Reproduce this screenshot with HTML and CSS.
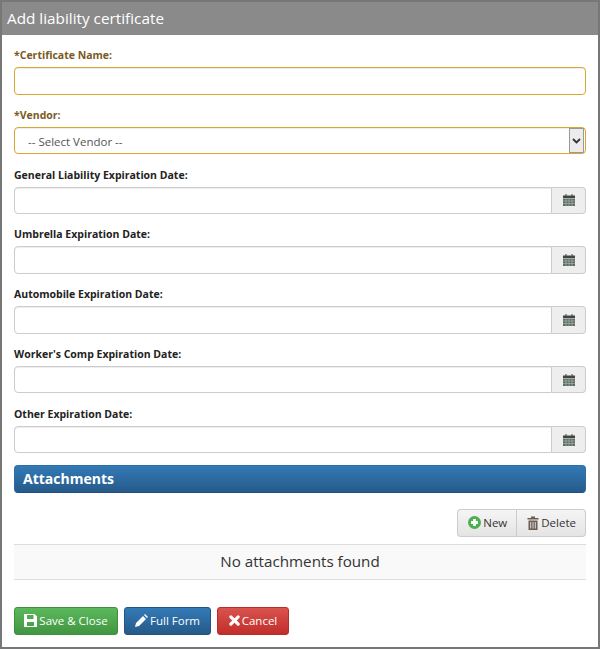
FILE: index.html
```html
<!DOCTYPE html>
<html lang="en">
<head>
    <meta charset="UTF-8">
    <title>Add liability certificate</title>
    <link rel="stylesheet" href="styles.css">
</head>
<body>
    <div class="dialog">
        <div class="dialog-title">Add liability certificate</div>
        <form class="dialog-body">
            <div class="field field-required">
                <label>*Certificate Name:</label>
                <input type="text" class="control">
            </div>
            <div class="field field-required">
                <label>*Vendor:</label>
                <div class="control select-box">
                    <span class="select-text">-- Select Vendor --</span>
                    <span class="select-arrow">
                        <svg width="9" height="6" viewBox="0 0 9 6"><path d="M1 1l3.500 3.500L8 1" fill="none" stroke="#333" stroke-width="1.800"/></svg>
                    </span>
                </div>
            </div>
            <div class="field">
                <label>General Liability Expiration Date:</label>
                <div class="date-group">
                    <input type="text" class="control">
                    <span class="date-addon"><svg class="cal" viewBox="0 0 12 12"><use href="#cal"/></svg></span>
                </div>
            </div>
            <div class="field">
                <label>Umbrella Expiration Date:</label>
                <div class="date-group">
                    <input type="text" class="control">
                    <span class="date-addon"><svg class="cal" viewBox="0 0 12 12"><use href="#cal"/></svg></span>
                </div>
            </div>
            <div class="field">
                <label>Automobile Expiration Date:</label>
                <div class="date-group">
                    <input type="text" class="control">
                    <span class="date-addon"><svg class="cal" viewBox="0 0 12 12"><use href="#cal"/></svg></span>
                </div>
            </div>
            <div class="field">
                <label>Worker's Comp Expiration Date:</label>
                <div class="date-group">
                    <input type="text" class="control">
                    <span class="date-addon"><svg class="cal" viewBox="0 0 12 12"><use href="#cal"/></svg></span>
                </div>
            </div>
            <div class="field">
                <label>Other Expiration Date:</label>
                <div class="date-group">
                    <input type="text" class="control">
                    <span class="date-addon"><svg class="cal" viewBox="0 0 12 12"><use href="#cal"/></svg></span>
                </div>
            </div>

            <div class="section-bar">Attachments</div>

            <div class="toolbar">
                <div class="btn-group">
                    <button type="button" class="btn-light">
                        <svg width="13" height="13" viewBox="0 0 13 13"><circle cx="6.500" cy="6.500" r="6.500" fill="#4fae4f"/><path d="M6.500 3v7M3 6.500h7" stroke="#fff" stroke-width="2.800"/></svg>
                        New
                    </button>
                    <button type="button" class="btn-light">
                        <svg width="12" height="14" viewBox="0 0 12 14"><path d="M4 2V.500h4V2h3.500v1.500H.500V2zM1.500 4.500h9V14h-9z" fill="#6b5c50"/><path d="M3.700 6v6.500M6 6v6.500M8.300 6v6.500" stroke="#ddd" stroke-width="1"/></svg>
                        Delete
                    </button>
                </div>
            </div>

            <div class="empty-row">No attachments found</div>

            <div class="actions">
                <button type="button" class="btn btn-green">
                    <svg width="13" height="13" viewBox="0 0 13 13"><path d="M0 0h10.500L13 2.500V13H0zM3 1v4h6.500V1zM3 8v4h7V8z" fill="#fff" fill-rule="evenodd"/></svg>
                    Save &amp; Close
                </button>
                <button type="button" class="btn btn-blue">
                    <svg width="13" height="13" viewBox="0 0 13 13"><path d="M0 13l1-4 7-7 3 3-7 7zM9 1l1-1 3 3-1 1z" fill="#fff"/></svg>
                    Full Form
                </button>
                <button type="button" class="btn btn-red">
                    <svg width="11" height="11" viewBox="0 0 12 12"><path d="M2 2l8 8M10 2l-8 8" stroke="#fff" stroke-width="3.400" stroke-linecap="round"/></svg>
                    Cancel
                </button>
            </div>
        </form>
    </div>

    <svg class="defs" width="0" height="0">
        <symbol id="cal" viewBox="0 0 12 12">
            <path d="M0 1.500h2.500V0h1v1.500h5V0h1v1.500H12V4H0z" fill="#444"/>
            <rect y="4.500" width="12" height="7.500" fill="#5f6b66"/>
            <path d="M3 4.500V12M6 4.500V12M9 4.500V12M0 7h12M0 9.500h12" stroke="#a5b5a8" stroke-width=".7"/>
        </symbol>
    </svg>
</body>
</html>
```

FILE: styles.css
```css
* {
    box-sizing: border-box;
}
html, body {
    margin: 0;
    height: 100%;
}
body {
    font-family: "Open Sans", Arial, sans-serif;
    font-size: 11.500px;
    color: #333;
    background: white;
}
.dialog {
    height: 649px;
    border: 2px solid #777;
}
.dialog-title {
    height: 33px;
    line-height: 33px;
    padding-left: 5px;
    background: #8a8a8a;
    color: white;
    font-size: 15.300px;
}
.dialog-body {
    padding: 12px 12px 0;
}
.field {
    height: 59.800px;
}
.field label {
    display: block;
    height: 20px;
    line-height: 16px;
    font-size: 10.500px;
    font-weight: 700;
    color: #222;
}
.field-required label {
    color: #7a5a22;
}
.control {
    display: block;
    width: 100%;
    height: 27.500px;
    background: white;
    border: 1px solid #ccc;
    border-radius: 4px;
    box-shadow: inset 0 1px 1px rgba(0,0,0,0.075);
    font: inherit;
}
.field-required .control {
    border-color: #dca62e;
}
.select-box {
    display: flex;
    align-items: center;
    justify-content: space-between;
    color: #555;
    padding: 0 1px 0 13px;
}
.select-text {
    padding-top: 2px;
}
.select-arrow {
    display: flex;
    align-items: center;
    justify-content: center;
    width: 15px;
    height: 25px;
    background: #ececec;
    border: 1px solid #999;
}
.date-group {
    display: flex;
}
.date-group .control {
    flex: 1;
    border-radius: 4px 0 0 4px;
}
.date-addon {
    display: flex;
    align-items: center;
    justify-content: center;
    width: 34px;
    height: 27.500px;
    background: #eee;
    border: 1px solid #ccc;
    border-left: none;
    border-radius: 0 4px 4px 0;
}
.cal {
    width: 12px;
    height: 12px;
}
.defs {
    position: absolute;
}
.section-bar {
    height: 28px;
    line-height: 25px;
    margin-top: -1px;
    padding-left: 8px;
    border: 1px solid #2e6da4;
    border-bottom-color: #204d8c;
    border-radius: 4px;
    background: linear-gradient(#337ab7, #265a88);
    color: white;
    font-size: 14px;
    font-weight: 700;
}
.toolbar {
    display: flex;
    justify-content: flex-end;
    margin-top: 16px;
}
.btn-group {
    display: flex;
}
.btn-light {
    display: flex;
    align-items: center;
    gap: 2px;
    height: 28px;
    padding: 0 9px 0 10px;
    background: linear-gradient(#f5f5f5, #e4e4e4);
    border: 1px solid #ccc;
    color: #333;
    font: inherit;
}
.btn-light:first-child {
    padding-right: 10px;
    border-radius: 4px 0 0 4px;
    border-right: none;
    box-shadow: inset -1px 0 0 #ccc;
}
.btn-light:last-child {
    border-radius: 0 4px 4px 0;
    border-left: none;
}
.empty-row {
    height: 36px;
    margin-top: 7px;
    line-height: 33px;
    text-align: center;
    background: #f9f9f9;
    border-top: 1px solid #ddd;
    border-bottom: 1px solid #ddd;
    font-size: 15.200px;
}
.actions {
    display: flex;
    gap: 6px;
    margin-top: 27px;
}
.btn {
    display: flex;
    align-items: center;
    justify-content: center;
    gap: 2px;
    height: 28px;
    padding: 0;
    border: 1px solid;
    border-radius: 3px;
    color: white;
    font: inherit;
    white-space: nowrap;
}
.btn-green {
    background: linear-gradient(#5cb85c, #419641);
    border-color: #3e8f3e;
    width: 104px;
}
.btn-blue {
    background: linear-gradient(#337ab7, #265a88);
    border-color: #245580;
    width: 87px;
}
.btn-red {
    background: linear-gradient(#d9534f, #c12e2a);
    border-color: #b92c28;
    width: 72px;
}
```
